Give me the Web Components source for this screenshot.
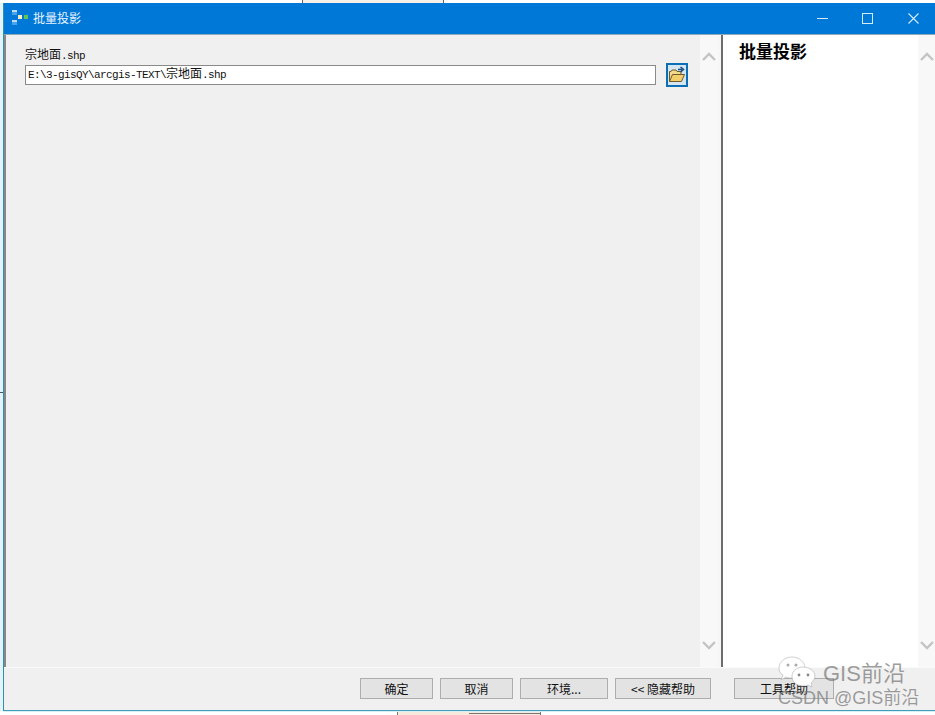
<!DOCTYPE html>
<html>
<head>
<meta charset="utf-8">
<title>批量投影</title>
<style>
  html, body { margin: 0; height: 715px; overflow: hidden; background: #fff; }
  body { font-family: "Liberation Mono", "Noto Sans CJK SC", monospace; }
</style>
</head>
<body>
<desk-scraps></desk-scraps>
<tool-window>
  <tool-param slot="form" label="宗地面.shp" value="E:\3-gisQY\arcgis-TEXT\宗地面.shp"></tool-param>
  <span slot="help">批量投影</span>
  <tool-button slot="actions" style="width:73px">确定</tool-button>
  <tool-button slot="actions" style="width:73px">取消</tool-button>
  <tool-button slot="actions" style="width:88px">环境...</tool-button>
  <tool-button slot="actions" style="width:96px">&lt;&lt; 隐藏帮助</tool-button>
  <tool-button slot="actions" style="width:100px;margin-left:16px">工具帮助</tool-button>
</tool-window>
<water-mark></water-mark>

<script>
class ToolButton extends HTMLElement {
  constructor() {
    super();
    this.attachShadow({ mode: 'open' }).innerHTML = `
      <style>
        :host {
          display: flex;
          align-items: center;
          justify-content: center;
          box-sizing: border-box;
          height: 21px;
          background: #e3e3e3;
          border: 1px solid #adadad;
          font: 12px "Noto Sans CJK SC", sans-serif;
          color: #111;
        }
      </style>
      <slot></slot>
    `;
  }
}

class ScrollTrack extends HTMLElement {
  constructor() {
    super();
    const arrow = (d) => `<svg width="14" height="9" viewBox="0 0 14 9"><path d="${d}" fill="none" stroke="#c4c4c4" stroke-width="2.4"/></svg>`;
    this.attachShadow({ mode: 'open' }).innerHTML = `
      <style>
        :host {
          display: flex;
          flex-direction: column;
          justify-content: space-between;
          align-items: center;
          box-sizing: border-box;
          padding: 17px 0 17px;
          background: #f8f8f8;
        }
        svg { display: block; }
      </style>
      ${arrow('M1 8 L7 2 L13 8')}
      ${arrow('M1 1 L7 7 L13 1')}
    `;
  }
}

class ToolParam extends HTMLElement {
  constructor() {
    super();
    this.attachShadow({ mode: 'open' });
  }

  // ascii runs are 6px wide here, chinese runs 12px
  static wrapCjk(text) {
    return text.replace(/[\u4e00-\u9fff]+/g, (run) => `<span class="cjk">${run}</span>`);
  }

  connectedCallback() {
    this.shadowRoot.innerHTML = `
      <style>
        :host {
          display: block;
          padding: 14px 12px 0 19px;
          font: 11px/15px "Liberation Mono", "Noto Sans CJK SC", monospace;
          letter-spacing: -0.6px;
          color: #111;
        }
        .cjk { font-size: 12px; letter-spacing: 0; }
        .label { height: 14px; }
        .row { display: flex; align-items: center; gap: 10px; }
        .input {
          flex: 1;
          box-sizing: border-box;
          height: 20px;
          padding: 1px 2px;
          background: #fff;
          border: 1px solid #8a8a8a;
          line-height: 16px;
          white-space: nowrap;
        }
        .browse {
          box-sizing: border-box;
          width: 22px;
          height: 24px;
          display: flex;
          align-items: center;
          justify-content: center;
          background: #d5e5f2;
          border: 2px solid #0a6fb4;
        }
      </style>
      <div class="label">${ToolParam.wrapCjk(this.getAttribute('label'))}</div>
      <div class="row">
        <div class="input">${ToolParam.wrapCjk(this.getAttribute('value'))}</div>
        <div class="browse">
          <svg width="18" height="18" viewBox="0 0 18 18">
            <path d="M1.5 15.5 V5.5 H3 L4 4 H8 L9 5.5 H13 V8" fill="#f3d98a" stroke="#6d5a2a" stroke-width="1"/>
            <path d="M1.5 15.5 L4.5 8.5 H16.5 L13.5 15.5 Z" fill="#f2cf6b" stroke="#6d5a2a" stroke-width="1"/>
            <path d="M10 3.5 H14 M12.5 1 L15.5 3.5 L12.5 6" fill="none" stroke="#1d4f86" stroke-width="1.6"/>
          </svg>
        </div>
      </div>
    `;
  }
}

class ToolWindow extends HTMLElement {
  constructor() {
    super();
    this.attachShadow({ mode: 'open' }).innerHTML = `
      <style>
        :host {
          display: flex;
          flex-direction: column;
          box-sizing: border-box;
          height: 708px;
          margin: 3px 0 0 3px;
          background: #f0f0f0;
          border-left: 1px solid #2f8fa8;
          border-bottom: 1px solid #3f9fb8;
          box-shadow: -3px 0 0 #e3f2fb, 0 1px 0 #d8eef8;
        }
        .title {
          display: flex;
          align-items: center;
          flex: none;
          height: 31px;
          padding-right: 16px;
          box-sizing: border-box;
          background: #0078d7;
          color: #e8f4ff;
          font: 12px "Noto Sans CJK SC", sans-serif;
        }
        .logo { margin: 0 4px 0 8px; display: block; }
        .name { flex: 1; padding-bottom: 2px; }
        .ctl { display: block; margin-left: 34px; }
        .ctl:last-child { margin-left: 35px; }
        .main { flex: 1; display: flex; min-height: 0; border-top: 1px solid #8fa9b8; }
        .form { width: 696px; flex: none; background: #f0f0f0; border-left: 2px solid #85898c; box-sizing: border-box; }
        scroll-track { width: 18px; flex: none; }
        .help + scroll-track { width: 17px; }
        .split { width: 5px; flex: none; background: #f6f6f6; border-right: 2px solid #6c6c6c; box-sizing: border-box; }
        .help {
          flex: 1;
          background: #fff;
          padding: 3px 0 0 16px;
          font: bold 17px "Noto Sans CJK SC", sans-serif;
          color: #000;
        }
        .foot {
          flex: none;
          height: 43px;
          box-sizing: border-box;
          display: flex;
          align-items: flex-start;
          gap: 7px;
          padding: 10px 0 0 356px;
          border-top: 1px solid #fafafa;
        }
      </style>
      <div class="title">
        <svg class="logo" width="17" height="17" viewBox="0 0 17 17">
          <rect x="0" y="0" width="5" height="5" fill="#4aa3e8"/>
          <rect x="0" y="0" width="5" height="2" fill="#bcdcf2"/>
          <rect x="0" y="10" width="5" height="5" fill="#4aa3e8"/>
          <rect x="0" y="10" width="5" height="2" fill="#bcdcf2"/>
          <rect x="6" y="5" width="4" height="4" fill="#f4efc0"/>
          <rect x="12" y="5" width="4" height="4" fill="#62c455"/>
        </svg>
        <span class="name">批量投影</span>
        <svg class="ctl" width="11" height="11" viewBox="0 0 11 11"><path d="M0 5.5 H11" stroke="#d5ecfb" stroke-width="1"/></svg>
        <svg class="ctl" width="11" height="11" viewBox="0 0 11 11"><rect x=".5" y=".5" width="10" height="10" fill="none" stroke="#d5ecfb"/></svg>
        <svg class="ctl" width="11" height="11" viewBox="0 0 11 11"><path d="M.5 .5 L10.5 10.5 M10.5 .5 L.5 10.5" stroke="#d5ecfb" stroke-width="1.1"/></svg>
      </div>
      <div class="main">
        <div class="form"><slot name="form"></slot></div>
        <scroll-track></scroll-track>
        <div class="split"></div>
        <div class="help"><slot name="help"></slot></div>
        <scroll-track></scroll-track>
      </div>
      <div class="foot"><slot name="actions"></slot></div>
    `;
  }
}

// bits of other windows showing round the dialog
class DeskScraps extends HTMLElement {
  constructor() {
    super();
    this.attachShadow({ mode: 'open' }).innerHTML = `
      <style>
        :host { display: block; position: absolute; inset: 0; }
        div { position: absolute; box-sizing: border-box; }
        .top { left: 302px; top: 0; width: 142px; height: 3px; background: #f6f1e8; border: solid #666; border-width: 0 1px; }
        .bottom { left: 397px; top: 712px; width: 144px; height: 3px; background: #f7e9dc; border: solid #777; border-width: 0 1px; }
        .bottom i { position: absolute; left: 71px; right: 0; top: 1px; height: 1px; background: #777; }
        .side { left: 0; top: 392px; width: 3px; height: 1px; background: #555; z-index: 1; }
      </style>
      <div class="top"></div>
      <div class="bottom"><i></i></div>
      <div class="side"></div>
    `;
  }
}

class WaterMark extends HTMLElement {
  constructor() {
    super();
    this.attachShadow({ mode: 'open' }).innerHTML = `
      <style>
        :host {
          position: absolute;
          left: 778px;
          top: 658px;
          width: 157px;
          height: 52px;
          color: rgba(120,120,120,.72);
          font: 18px/22px "Liberation Sans", "Noto Sans CJK SC", sans-serif;
          white-space: nowrap;
        }
        svg { position: absolute; left: 0; top: -2px; }
        .a { position: absolute; left: 45px; top: 4px; font-size: 22px; line-height: 24px; }
        .b { position: absolute; left: 0; top: 29px; }
      </style>
      <svg width="40" height="34" viewBox="0 0 40 34">
        <path d="M14 1 C21 1 27 6 27 12 C27 18 21 22 14 22 C12 22 10 22 8 21 L3 24 L5 19 C2 17 1 15 1 12 C1 6 7 1 14 1 Z" fill="rgba(255,255,255,.9)" stroke="rgba(170,170,170,.55)"/>
        <path d="M25 11 C31 11 37 15 37 20 C37 23 35 25 33 27 L34 31 L30 29 C28 30 27 30 25 30 C19 30 14 26 14 20 C14 15 19 11 25 11 Z" fill="rgba(255,255,255,.95)" stroke="rgba(170,170,170,.55)"/>
        <circle cx="10" cy="9" r="1.5" fill="#aaa"/><circle cx="18" cy="9" r="1.5" fill="#aaa"/>
        <circle cx="21" cy="19" r="1.4" fill="#888"/><circle cx="30" cy="19" r="1.4" fill="#888"/>
      </svg>
      <span class="a">GIS前沿</span>
      <span class="b">CSDN @GIS前沿</span>
    `;
  }
}

customElements.define('tool-button', ToolButton);
customElements.define('scroll-track', ScrollTrack);
customElements.define('tool-param', ToolParam);
customElements.define('tool-window', ToolWindow);
customElements.define('desk-scraps', DeskScraps);
customElements.define('water-mark', WaterMark);
</script>
</body>
</html>
